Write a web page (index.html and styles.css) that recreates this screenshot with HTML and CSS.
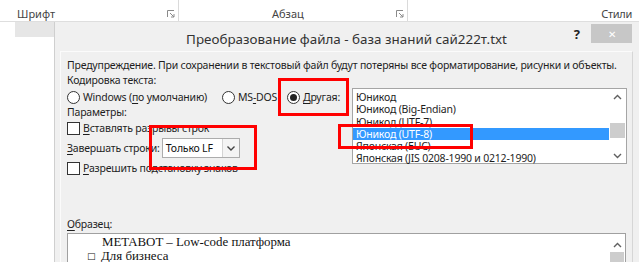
FILE: index.html
```html
<!DOCTYPE html>
<html lang="ru">
<head>
<meta charset="utf-8">
<title>Преобразование файла</title>
<link rel="stylesheet" href="styles.css">
</head>
<body>
<div class="screen">
  <div class="ribbon">
    <div class="group g-font">
      <span class="glabel">Шрифт</span>
      <svg class="launcher" width="8" height="8" viewBox="0 0 8 8"><path d="M0.5 7V0.5H7" fill="none" stroke="#8a8a8a"/><path d="M3 3L7 7M7 4V7H4" fill="none" stroke="#8a8a8a"/></svg>
    </div>
    <div class="group g-para">
      <span class="glabel">Абзац</span>
      <svg class="launcher" width="8" height="8" viewBox="0 0 8 8"><path d="M0.5 7V0.5H7" fill="none" stroke="#8a8a8a"/><path d="M3 3L7 7M7 4V7H4" fill="none" stroke="#8a8a8a"/></svg>
    </div>
    <div class="group g-styles">
      <span class="glabel">Стили</span>
    </div>
  </div>
  <div class="workspace">
    <div class="doc-left"><div class="band"></div></div>
    <div class="dialog">
      <div class="titlebar">
        <div></div>
        <div class="title">Преобразование файла - база знаний сай222т.txt</div>
        <div class="controls"><span class="help">?</span><span class="close">✕</span></div>
      </div>
      <div class="panel">
        <div class="line warn">Предупреждение. При сохранении в текстовый файл будут потеряны все форматирование, рисунки и объекты.</div>
        <div class="line">Кодировка текста:</div>
        <div class="enc-row">
          <div class="left-col">
            <div class="radios">
              <span class="opt o-win"><span class="radio"></span>Windows (<u>п</u>о умолчанию)</span>
              <span class="opt o-dos"><span class="radio"></span>MS<u>-</u>DOS</span>
              <span class="opt o-other"><span class="radio checked"></span><u>Д</u>ругая:</span>
            </div>
            <div class="line params">Параметры:</div>
            <div class="check-row"><span class="checkbox"></span><span><u>В</u>ставлять разрывы строк</span></div>
            <div class="select-row">
              <span><u>З</u>авершать строки:</span>
              <span class="select"><span class="select-text">Только LF</span><span class="select-btn"><svg width="8" height="5" viewBox="0 0 8 5"><path d="M0.5 0.5L4 4L7.5 0.5" fill="none" stroke="#444" stroke-width="1.4"/></svg></span></span>
            </div>
            <div class="check-row"><span class="checkbox"></span><span><u>Р</u>азрешить подстановку знаков</span></div>
          </div>
          <div class="listbox">
            <ul class="items">
              <li>Юникод</li>
              <li>Юникод (Big-Endian)</li>
              <li>Юникод (UTF-7)</li>
              <li class="sel">Юникод (UTF-8)</li>
              <li>Японская (EUC)</li>
              <li>Японская (JIS 0208-1990 и 0212-1990)</li>
            </ul>
            <div class="vscroll">
              <svg width="9" height="6" viewBox="0 0 9 6"><path d="M1 5L4.5 1.5L8 5" fill="none" stroke="#606060" stroke-width="1.4"/></svg>
              <div class="track"><div class="thumb thumb-list"></div></div>
              <svg width="9" height="6" viewBox="0 0 9 6"><path d="M1 1L4.5 4.5L8 1" fill="none" stroke="#606060" stroke-width="1.4"/></svg>
            </div>
          </div>
        </div>
        <div class="line sample-label"><u>О</u>бразец:</div>
        <div class="preview">
          <div class="doc">
            <div class="p-title">METABOT – Low-code платформа</div>
            <div class="p-item"><span class="bullet">□</span>Для бизнеса</div>
          </div>
          <div class="vscroll pv">
            <svg width="9" height="6" viewBox="0 0 9 6"><path d="M1 5L4.5 1.5L8 5" fill="none" stroke="#606060" stroke-width="1.4"/></svg>
            <div class="track"><div class="thumb thumb-pv"></div></div>
          </div>
        </div>
      </div>
    </div>
  </div>
  <div class="mark m1"></div>
  <div class="mark m2"></div>
  <div class="mark m3"></div>
</div>
</body>
</html>
```

FILE: styles.css
```css
* { box-sizing: border-box; }
html, body { margin: 0; padding: 0; }
body {
  width: 639px;
  height: 262px;
  overflow: hidden;
  background: #fff;
  font-family: "Noto Sans", "Open Sans", sans-serif;
  font-size: 10.5px;
  letter-spacing: -0.2px;
  color: #1e1e1e;
}
.screen { position: relative; width: 639px; height: 262px; overflow: hidden; }
u { text-decoration-thickness: 1px; text-underline-offset: 2px; }

/* ribbon */
.ribbon {
  display: flex;
  height: 22px;
  background: #fff;
  border-bottom: 1px solid #dedede;
  color: #444;
  font-size: 11px;
  letter-spacing: 0;
}
.group {
  display: flex;
  align-items: center;
  height: 21px;
  border-right: 1px solid #dadada;
  padding-top: 6px;
  flex: none;
}
.g-font { width: 179px; padding-left: 17px; padding-right: 3px; }
.g-font .glabel { flex: 1; }
.g-para { width: 229px; padding-left: 93px; padding-right: 3px; }
.g-para .glabel { flex: 1; }
.g-styles { flex: 1; border-right: 0; justify-content: flex-end; padding-right: 7px; }
.g-styles .glabel { letter-spacing: -0.3px; }
.launcher { display: block; }

/* workspace */
.workspace { display: flex; height: 240px; }
.doc-left { width: 54px; flex: none; background: #fff; }
.band { margin-left: 15px; height: 15px; background: #e6e6e6; }
.dialog {
  flex: 1;
  min-width: 0;
  background: #f0f0f0;
  border-left: 1px solid #cfcfcf;
  padding: 0 6px 0 5px;
  display: flex;
  flex-direction: column;
}
.titlebar {
  display: grid;
  grid-template-columns: 1fr auto 1fr;
  height: 29px;
  flex: none;
  align-items: start;
}
.title {
  font-size: 13.4px;
  letter-spacing: 0;
  color: #333;
  padding-top: 9px;
  line-height: 17px;
  white-space: nowrap;
}
.controls { display: flex; justify-content: flex-end; align-items: flex-start; padding-top: 2px; margin-right: 1px; }
.help { font-weight: bold; font-size: 13px; letter-spacing: 0; color: #222; margin-right: 11px; margin-top: 4px; line-height: 13px; }
.close {
  width: 41px; height: 19px;
  background: #c7c7c7;
  color: #fff;
  font-size: 10px;
  display: flex; align-items: center; justify-content: center;
}

.panel {
  flex: 1;
  border: 1px solid;
  border-color: #fbfbfb #d6d6d6 #d6d6d6 #fbfbfb;
  padding: 6px 5px 0 6px;
  min-width: 0;
}
.line { height: 14px; line-height: 14px; white-space: nowrap; }
.warn { height: 15px; }

.enc-row { display: flex; align-items: flex-start; margin-top: 1px; }
.left-col { width: 285px; flex: none; }
.radios { display: flex; height: 18px; align-items: center; }
.opt { display: flex; align-items: center; white-space: nowrap; flex: none; }
.radio {
  width: 13px; height: 13px;
  border: 1px solid #333;
  border-radius: 50%;
  background: #fff;
  margin-right: 3px;
  flex: none;
  display: inline-flex; align-items: center; justify-content: center;
}
.radio.checked::after { content: ""; width: 7px; height: 7px; border-radius: 50%; background: #222; }
.o-win { width: 155px; }
.o-dos { width: 65px; }
.params { margin-top: -1px; height: 15px; }

.check-row { display: flex; align-items: center; height: 16px; white-space: nowrap; }
.checkbox { width: 13px; height: 13px; border: 1px solid #333; background: #fff; margin-right: 3px; flex: none; }
.select-row { display: flex; align-items: center; height: 24px; white-space: nowrap; }
.select {
  margin-left: 2px;
  width: 78px; height: 20px;
  border: 1px solid #acacac;
  background: #fff;
  display: flex;
  flex: none;
}
.select-text { flex: 1; padding-left: 3px; line-height: 18px; color: #111; }
.select-btn {
  width: 17px;
  border-left: 1px solid #d4d4d4;
  background: #f4f4f4;
  display: flex; align-items: center; justify-content: center;
}
.select-btn svg { display: block; }

.listbox {
  flex: 1;
  height: 76px;
  border: 1px solid #a5a5a5;
  background: #fff;
  display: flex;
  min-width: 0;
}
.items { list-style: none; margin: 0; padding: 2px 0 0; flex: 1; }
.items li { height: 12.3px; line-height: 12px; padding-left: 3px; white-space: nowrap; }
.items li.sel { background: #3399ff; color: #fff; }
.vscroll {
  width: 17px;
  flex: none;
  display: flex; flex-direction: column; align-items: center;
  background: #fff;
}
.vscroll svg { display: block; margin: 5px 0 4px; flex: none; }
.track { flex: 1; width: 100%; display: flex; flex-direction: column; }
.thumb { background: #cdcdcd; margin: 0 1px; }
.thumb-list { margin-top: 19px; height: 15px; }
.thumb-pv { margin-top: 1px; flex: 1; }

.sample-label { margin-top: 41px; margin-bottom: 2px; }
.preview {
  height: 60px;
  border: 1px solid #a0a0a0;
  background: #fff;
  display: flex;
  margin-right: 1px;
}
.doc { flex: 1; font-family: "Liberation Serif", "Times New Roman", serif; font-size: 12.9px; letter-spacing: 0; color: #111; padding-top: 1px; }
.p-title { padding-left: 34px; line-height: 14px; }
.p-item { padding-left: 19px; line-height: 14px; display: flex; }
.bullet { width: 14px; font-family: "DejaVu Sans", sans-serif; font-size: 9px; }
.pv { width: 16px; }
.pv svg { margin: 8px 0 3px; }

/* annotation marks */
.mark { position: absolute; border: 3px solid #ff0000; }
.m1 { left: 278px; top: 78px; width: 71px; height: 38px; }
.m2 { left: 149px; top: 125px; width: 108px; height: 45px; }
.m3 { left: 338px; top: 124px; width: 135px; height: 25px; }
```
